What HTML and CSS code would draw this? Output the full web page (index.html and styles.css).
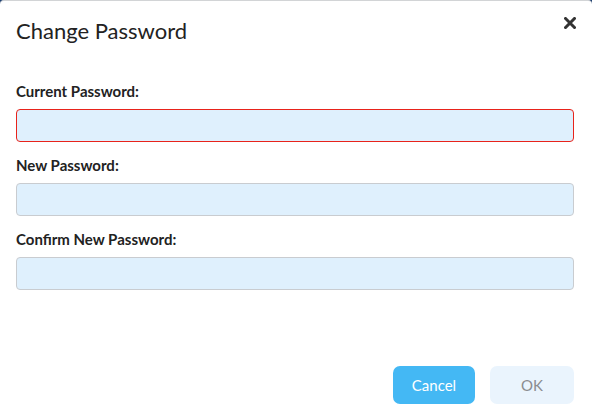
FILE: index.html
```html
<!DOCTYPE html>
<html>
<head>
<meta charset="utf-8">
<link rel="stylesheet" href="styles.css">
</head>
<body>
<div class="modal">
  <div class="header">
    <h1 class="title">Change Password</h1>
    <button class="close" aria-label="Close">
      <svg width="12" height="12" viewBox="0 0 12 12"><path d="M1.5 1.5 L10.5 10.5 M10.5 1.5 L1.5 10.5" stroke="#333" stroke-width="3" stroke-linecap="square"/></svg>
    </button>
  </div>
  <div class="form">
    <div class="field">
      <label class="label">Current Password:</label>
      <input class="input input-error" type="password">
    </div>
    <div class="field">
      <label class="label">New Password:</label>
      <input class="input" type="password">
    </div>
    <div class="field">
      <label class="label">Confirm New Password:</label>
      <input class="input" type="password">
    </div>
  </div>
  <div class="footer">
    <button class="btn btn-cancel">Cancel</button>
    <button class="btn btn-ok">OK</button>
  </div>
</div>
</body>
</html>
```

FILE: styles.css
```css
html, body {
  margin: 0;
  padding: 0;
  height: 100%;
}
body {
  background: #1d3f70;
  font-family: Lato, "Noto Sans", sans-serif;
}
.modal {
  box-sizing: border-box;
  height: 419px;
  background: #fff;
  border-top: 1px solid #d2d4d6;
  border-radius: 4px 4px 0 0;
  display: flex;
  flex-direction: column;
  padding: 0 18px 15px 16px;
}
.header {
  display: flex;
  justify-content: space-between;
  align-items: flex-start;
  padding-top: 17px;
}
.title {
  margin: 0;
  font-size: 22px;
  font-weight: 400;
  line-height: 26px;
  color: #222;
}
.close {
  border: 0;
  background: none;
  padding: 0;
  margin-top: -1px;
  margin-right: -2px;
  cursor: pointer;
}
.close svg { display: block; }
.form {
  display: flex;
  flex-direction: column;
  gap: 15px;
  margin-top: 39px;
}
.field {
  display: flex;
  flex-direction: column;
  gap: 9px;
}
.label {
  font-size: 15px;
  font-weight: 700;
  line-height: 17px;
  color: #222;
}
.input {
  box-sizing: border-box;
  height: 33px;
  width: 100%;
  background: #dff0fd;
  border: 1px solid #c9ccd0;
  border-radius: 4px;
  margin: 0;
}
.input-error {
  border-color: #e8231b;
}
.footer {
  margin-top: auto;
  display: flex;
  justify-content: flex-end;
  gap: 15px;
}
.btn {
  height: 38px;
  border: 0;
  border-radius: 7px;
  font-family: Lato, "Noto Sans", sans-serif;
  font-size: 15px;
  padding: 0;
}
.btn-cancel {
  width: 82px;
  background: #44b8f4;
  color: #fff;
}
.btn-ok {
  width: 84px;
  background: #eaf4fd;
  color: #8a8d90;
}
```
